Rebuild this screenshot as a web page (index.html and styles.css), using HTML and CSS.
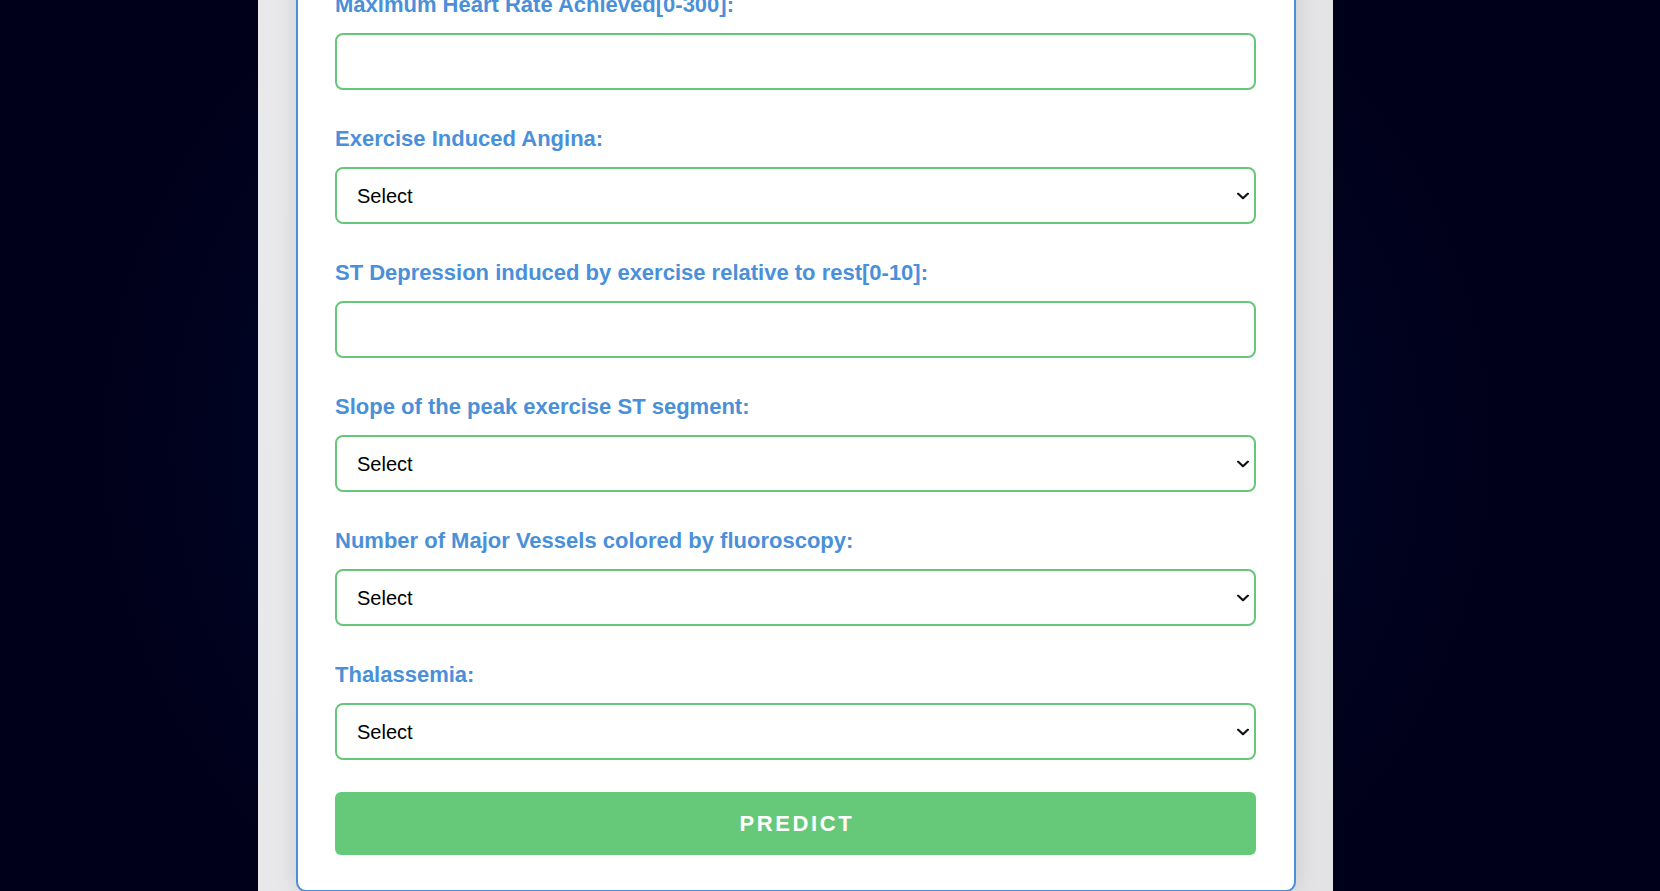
FILE: index.html
```html
<!DOCTYPE html>
<html lang="en">
<head>
<meta charset="utf-8">
<title>Heart Disease Prediction</title>
<link rel="stylesheet" href="styles.css">
</head>
<body>
<div class="page">
  <div class="panel">
    <form class="card">
      <div class="field">
        <label class="field-label" for="thalach">Maximum Heart Rate Achieved[0-300]:</label>
        <input class="control" type="text" id="thalach" name="thalach">
      </div>
      <div class="field">
        <label class="field-label" for="exang">Exercise Induced Angina:</label>
        <div class="select-wrap">
          <select class="control select" id="exang" name="exang">
            <option>Select</option>
            <option>Yes</option>
            <option>No</option>
          </select>
          <svg class="chevron" viewBox="0 0 12 7" width="12" height="7" aria-hidden="true"><path d="M1.2 1.2 L6 5.8 L10.8 1.2" /></svg>
        </div>
      </div>
      <div class="field">
        <label class="field-label" for="oldpeak">ST Depression induced by exercise relative to rest[0-10]:</label>
        <input class="control" type="text" id="oldpeak" name="oldpeak">
      </div>
      <div class="field">
        <label class="field-label" for="slope">Slope of the peak exercise ST segment:</label>
        <div class="select-wrap">
          <select class="control select" id="slope" name="slope">
            <option>Select</option>
            <option>Upsloping</option>
            <option>Flat</option>
            <option>Downsloping</option>
          </select>
          <svg class="chevron" viewBox="0 0 12 7" width="12" height="7" aria-hidden="true"><path d="M1.2 1.2 L6 5.8 L10.8 1.2" /></svg>
        </div>
      </div>
      <div class="field">
        <label class="field-label" for="ca">Number of Major Vessels colored by fluoroscopy:</label>
        <div class="select-wrap">
          <select class="control select" id="ca" name="ca">
            <option>Select</option>
            <option>0</option>
            <option>1</option>
            <option>2</option>
            <option>3</option>
          </select>
          <svg class="chevron" viewBox="0 0 12 7" width="12" height="7" aria-hidden="true"><path d="M1.2 1.2 L6 5.8 L10.8 1.2" /></svg>
        </div>
      </div>
      <div class="field">
        <label class="field-label" for="thal">Thalassemia:</label>
        <div class="select-wrap">
          <select class="control select" id="thal" name="thal">
            <option>Select</option>
            <option>Normal</option>
            <option>Fixed Defect</option>
            <option>Reversible Defect</option>
          </select>
          <svg class="chevron" viewBox="0 0 12 7" width="12" height="7" aria-hidden="true"><path d="M1.2 1.2 L6 5.8 L10.8 1.2" /></svg>
        </div>
      </div>
      <button class="predict" type="button">PREDICT</button>
    </form>
  </div>
</div>
</body>
</html>
```

FILE: styles.css
```css
html, body {
  margin: 0;
  padding: 0;
  height: 100%;
  overflow: hidden;
}

body {
  font-family: "Liberation Sans", Arial, sans-serif;
  background: radial-gradient(ellipse 700px 620px at 48% 50%, #00163e 0%, #000f33 35%, #000626 65%, #00001a 100%);
  background-color: #00001a;
}

.page {
  display: flex;
  height: 100%;
  padding-left: 258px;
}

.panel {
  width: 1000px;
  padding: 0 37px 0 38px;
  background: linear-gradient(100deg, #e9e9eb 0%, #e3e3e6 100%);
  height: 100%;
}

.card {
  box-sizing: border-box;
  width: 1000px;
  margin-top: -55px;
  padding: 40px 38px 35px 37px;
  background: #ffffff;
  border: 2px solid #4a90d9;
  border-radius: 10px;
  box-shadow: 0 0 22px rgba(0, 0, 0, 0.12);
}

.field {
  padding-bottom: 31px;
}

.field-label {
  display: block;
  padding-top: 5px;
  margin-bottom: 16px;
  font-size: 22px;
  line-height: 25px;
  font-weight: bold;
  color: #4a90d9;
}

.control {
  display: block;
  box-sizing: border-box;
  width: 100%;
  height: 57px;
  margin: 0;
  padding: 0 30px 0 20px;
  font-family: "Liberation Sans", Arial, sans-serif;
  font-size: 20px;
  color: #000000;
  background: #ffffff;
  border: 2px solid #66c77a;
  border-radius: 8px;
  outline: none;
}

.select-wrap {
  position: relative;
}

.select {
  -webkit-appearance: none;
  appearance: none;
  cursor: pointer;
}

.chevron {
  position: absolute;
  right: 7px;
  top: 50%;
  transform: translateY(-50%);
  pointer-events: none;
}

.chevron path {
  fill: none;
  stroke: #111111;
  stroke-width: 2.2;
  stroke-linecap: square;
  stroke-linejoin: miter;
}

.predict {
  display: block;
  box-sizing: border-box;
  width: 100%;
  height: 63px;
  margin: 1px 0 0 0;
  padding: 0 0 0 2.6px;
  font-family: "Liberation Sans", Arial, sans-serif;
  font-size: 22px;
  font-weight: bold;
  letter-spacing: 2.6px;
  color: #ffffff;
  background: #66c97a;
  border: none;
  border-radius: 6px;
  cursor: pointer;
}
```
